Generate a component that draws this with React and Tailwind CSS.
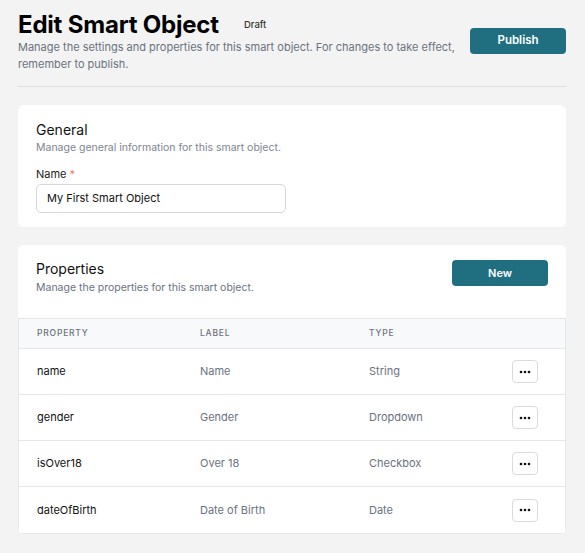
const rows = [
  { name: 'name', label: 'Name', type: 'String' },
  { name: 'gender', label: 'Gender', type: 'Dropdown' },
  { name: 'isOver18', label: 'Over 18', type: 'Checkbox' },
  { name: 'dateOfBirth', label: 'Date of Birth', type: 'Date' },
];

function DotsButton() {
  return (
    <button className="flex h-[23px] w-[26px] items-center justify-center rounded-[4px] border border-[#d9dbe0] bg-white">
      <svg width="12" height="4" viewBox="0 0 12 4" fill="#111">
        <circle cx="2" cy="2" r="1.3" />
        <circle cx="6" cy="2" r="1.3" />
        <circle cx="10" cy="2" r="1.3" />
      </svg>
    </button>
  );
}

export default function App() {
  return (
    <div className="min-h-[553px] bg-[#f3f3f3] pl-[18px] pr-[19px] pt-[11px] pb-5 font-['Inter',sans-serif] text-[#111]">
      {/* header */}
      <div className="flex items-start justify-between border-b border-[#e1e1e1] pb-[13px]">
        <div>
          <div className="flex items-start gap-[25px]">
            <h1 className="text-[24px] font-bold leading-[28px] tracking-[-0.2px] text-black">Edit Smart Object</h1>
            <span className="mt-[7px] text-[9.5px] font-medium text-[#333]">Draft</span>
          </div>
          <p className="mt-0 w-[450px] text-[11px] leading-[17px] text-[#6b7280]">
            Manage the settings and properties for this smart object. For changes to take effect, remember to publish.
          </p>
        </div>
        <button className="mt-[17px] h-[26px] w-[96px] rounded-[4px] bg-[#1f6f80] text-[11.5px] font-semibold text-white">
          Publish
        </button>
      </div>

      {/* general */}
      <div className="mt-[18px] rounded-[6px] bg-white px-[18px] pt-[16px] pb-[14px]">
        <h2 className="text-[14px] leading-[18px] text-[#111]">General</h2>
        <p className="mt-[2px] text-[10.5px] leading-[14px] text-[#808590]">Manage general information for this smart object.</p>
        <label className="mt-[12px] block text-[11px] leading-[14px] text-[#222]">
          Name <span className="text-[#e8845a]">*</span>
        </label>
        <div className="mt-[3px] flex h-[29px] w-[250px] items-center rounded-[5px] border border-[#d6d8dd] px-[10px] text-[11px] text-[#111]">
          My First Smart Object
        </div>
      </div>

      {/* properties */}
      <div className="mt-[18px] overflow-hidden rounded-[6px] bg-white">
        <div className="flex items-start justify-between px-[18px] pt-[15px] pb-[23px]">
          <div>
            <h2 className="text-[14px] leading-[18px] text-[#111]">Properties</h2>
            <p className="mt-[3px] text-[10.5px] leading-[14px] text-[#6b7280]">Manage the properties for this smart object.</p>
          </div>
          <button className="h-[26px] w-[96px] rounded-[4px] bg-[#1f6f80] text-[11px] font-semibold text-white">New</button>
        </div>
        <div className="border border-[#e4e6ea]">
          <div className="grid h-[30px] grid-cols-[163px_169px_143px_1fr] items-center border-b border-[#e4e6ea] bg-[#f8f9fa] pl-[18px] text-[8.5px] font-medium tracking-[0.8px] text-[#6b7280]">
            <span>PROPERTY</span>
            <span>LABEL</span>
            <span>TYPE</span>
            <span></span>
          </div>
          {rows.map((r, i) => (
            <div
              key={r.name}
              className={`grid h-[46px] grid-cols-[163px_169px_143px_1fr] items-center pl-[18px] text-[11px] ${i < rows.length - 1 ? 'border-b border-[#e4e6ea]' : ''}`}
            >
              <span className="text-[#111]">{r.name}</span>
              <span className="text-[#6b7280]">{r.label}</span>
              <span className="text-[#6b7280]">{r.type}</span>
              <DotsButton />
            </div>
          ))}
        </div>
      </div>
    </div>
  );
}
